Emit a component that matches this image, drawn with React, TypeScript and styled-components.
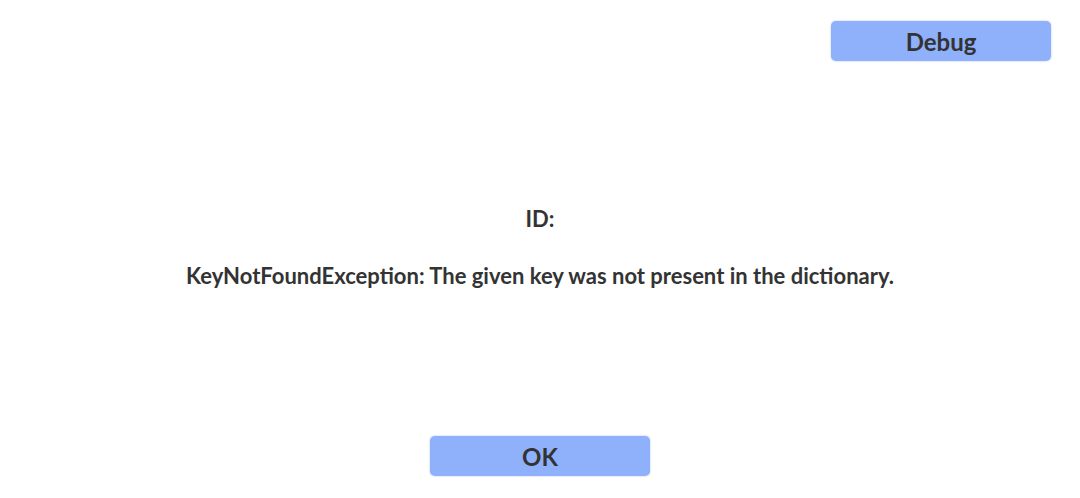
import React from "react";
import styled, { createGlobalStyle } from "styled-components";

const GlobalStyle = createGlobalStyle`
  html, body {
    margin: 0;
    padding: 0;
    background: #ffffff;
  }
  body {
    font-family: Lato, "Noto Sans", sans-serif;
    color: #333333;
  }
`;

const Screen = styled.div`
  width: 1080px;
  height: 498px;
  display: flex;
  flex-direction: column;
  box-sizing: border-box;
  padding: 21px 29px 22px 29px;
`;

const TopBar = styled.div`
  display: flex;
  justify-content: flex-end;
`;

const Message = styled.div`
  flex: 1;
  display: flex;
  flex-direction: column;
  align-items: center;
  padding-top: 145px;
  gap: 31px;
`;

const Line = styled.div`
  font-weight: 700;
  font-size: 22px;
  line-height: 26px;
  color: #333333;
  text-align: center;
`;

const Footer = styled.div`
  display: flex;
  justify-content: center;
`;

const Button = styled.button`
  width: 220px;
  height: 40px;
  border: none;
  border-radius: 5px;
  background: #8fb1fb;
  box-shadow: 0 0 2px rgba(120, 150, 220, 0.6);
  font-family: Lato, "Noto Sans", sans-serif;
  font-weight: 700;
  font-size: 24px;
  color: #333333;
  cursor: pointer;
  padding: 0;
`;

export default function App() {
  return (
    <>
      <GlobalStyle />
      <Screen>
        <TopBar>
          <Button>Debug</Button>
        </TopBar>
        <Message>
          <Line>ID:</Line>
          <Line>KeyNotFoundException: The given key was not present in the dictionary.</Line>
        </Message>
        <Footer>
          <Button>OK</Button>
        </Footer>
      </Screen>
    </>
  );
}
